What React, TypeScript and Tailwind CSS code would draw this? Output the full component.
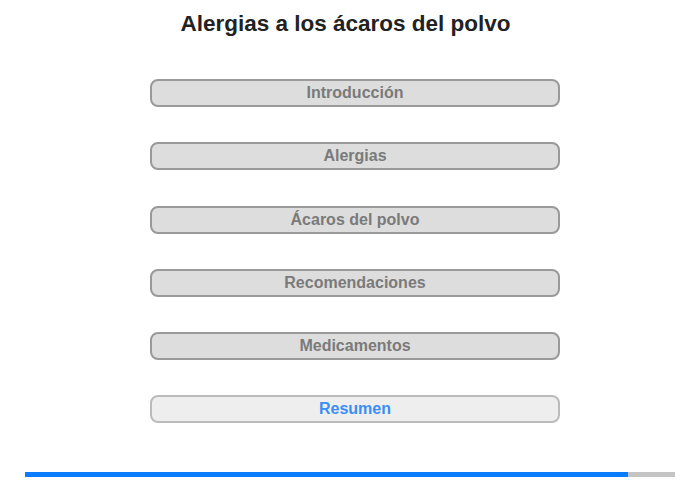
import React from 'react';

const sections = ['Introducción', 'Alergias', 'Ácaros del polvo', 'Recomendaciones', 'Medicamentos'];

const App: React.FC = () => {
    return (
        <div className="w-[700px] h-[480px] bg-white flex flex-col items-center" style={{ fontFamily: '"Liberation Sans", Arial, sans-serif' }}>
            <h1 className="mt-[11px] mr-[9px] text-[22.5px] leading-[26px] font-bold text-[#222]">Alergias a los ácaros del polvo</h1>
            <div className="mt-[42px] ml-[10px] flex flex-col gap-[35.25px]">
                {sections.map(s => (
                    <button key={s} className="w-[410px] h-[28px] rounded-[8px] border-2 border-[#999] bg-[#ddd] text-[16px] font-bold text-[#7a7a7a] leading-none">
                        {s}
                    </button>
                ))}
                <button className="w-[410px] h-[28px] rounded-[8px] border-2 border-[#bbb] bg-[#eee] text-[16px] font-bold text-[#3b8ef5] leading-none">
                    Resumen
                </button>
            </div>
            <div className="mt-[49px] w-[650px] h-[5px] bg-[#c4c4c4] flex">
                <div className="w-[603px] h-full bg-[#0a7cff]" />
            </div>
        </div>
    );
};

export default App;
